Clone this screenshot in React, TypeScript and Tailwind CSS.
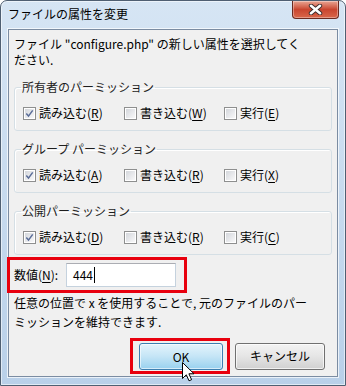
import React from "react";

function Check({ on }: { on?: boolean }) {
  return (
    <span className="flex w-[13px] h-[13px] shrink-0 border border-[#8e8f8f] bg-white p-px">
      <span className="flex flex-1 items-center justify-center bg-linear-to-br from-[#d4d7dc] to-[#f8f8f9]">
        {on && (
          <svg width="9" height="9" viewBox="0 0 9 9">
            <path d="M1.3 4.6 L3.5 7.1 L7.7 1.4" fill="none" stroke="#5a6d98" strokeWidth="1.5" />
          </svg>
        )}
      </span>
    </span>
  );
}

function Opt({ label, k, on }: { label: string; k: string; on?: boolean }) {
  return (
    <label className="flex items-center gap-[3px]">
      <Check on={on} />
      <span>
        {label}(<span className="underline underline-offset-[2px]">{k}</span>)
      </span>
    </label>
  );
}

function Group({ title, keys }: { title: string; keys: [string, string, string] }) {
  return (
    <fieldset className="mx-[5px] rounded-[3px] border border-[#d5dfe5] px-[8px] pt-[10px] pb-[9px] shadow-[inset_1px_1px_0_#fff]">
      <legend className="-ml-[2px] px-[1px] leading-[16px] text-[#1e1e1e]">{title}</legend>
      <div className="grid grid-cols-[101px_100px_auto] leading-[16px]">
        <Opt label="読み込む" k={keys[0]} on />
        <Opt label="書き込む" k={keys[1]} />
        <Opt label="実行" k={keys[2]} />
      </div>
    </fieldset>
  );
}

export default function App() {
  return (
    <div className="relative w-[346px] h-[386px] overflow-hidden rounded-t-[7px] border border-[#4f5f72] bg-linear-to-b from-[#d6e5f4] to-[#b9d0e9] text-[12px] text-black shadow-[inset_0_0_0_1px_rgba(255,255,255,0.55)] font-['Noto_Sans_CJK_JP','Noto_Sans',sans-serif]">
      {/* title bar */}
      <div className="flex h-[28px] items-start">
        <span className="pl-[7px] pt-[5px] leading-[16px]">ファイルの属性を変更</span>
        <div className="ml-auto mr-[6px] flex h-[18px] w-[47px] items-center justify-center rounded-b-[4px] border border-t-0 border-[#6b2a20] bg-linear-to-b from-[#e8a493] via-[#c9452f] to-[#d9664a] shadow-[inset_0_0_0_1px_rgba(255,255,255,0.35)]">
          <svg width="15" height="11" viewBox="0 0 15 11">
            <path d="M3 1.8 L12 9.2 M12 1.8 L3 9.2" stroke="#3b2a2a" strokeWidth="4.4" strokeLinecap="round" />
            <path d="M3 1.8 L12 9.2 M12 1.8 L3 9.2" stroke="#ffffff" strokeWidth="2.6" strokeLinecap="round" />
          </svg>
        </div>
      </div>

      {/* client area */}
      <div className="ml-[7px] flex h-[348px] w-[330px] flex-col border border-[#7b8ca2] bg-[#f0f0f0] shadow-[0_0_0_1px_rgba(255,255,255,0.7)]">
        <p className="pl-[5px] pt-[6px] leading-[16px]">
          ファイル "configure.php" の新しい属性を選択してく
          <br />
          ださい.
        </p>

        <div className="mt-[11px]">
          <Group title="所有者のパーミッション" keys={["R", "W", "E"]} />
        </div>
        <div className="mt-[10px]">
          <Group title="グループ パーミッション" keys={["A", "R", "X"]} />
        </div>
        <div className="mt-[10px]">
          <Group title="公開パーミッション" keys={["D", "R", "C"]} />
        </div>

        <div className="-ml-[2px] mt-[2px] flex h-[36px] w-[180px] items-center border-[3px] border-[#e8000e] pl-[4px]">
          <span className="inline-block w-[52px] leading-[16px]">
            数値(<span className="underline underline-offset-[2px]">N</span>):
          </span>
          <div className="flex h-[24px] w-[110px] items-center border border-[#c5d2de] border-t-[#abadb3] bg-white pl-[6px] leading-[16px]">
            444
            <span className="ml-px h-[16px] w-px bg-black" />
          </div>
        </div>

        <p className="pl-[5px] leading-[19px]">
          任意の位置で x を使用することで, 元のファイルのパー
          <br />
          ミッションを維持できます.
        </p>

        <div className="mt-[7px] flex items-center justify-end gap-[5px] pr-[12px]">
          <div className="border-[3px] border-[#e8000e] pl-[6px] pr-[4px] pt-[2px] pb-[1px]">
            <button className="flex h-[27px] w-[84px] items-center justify-center rounded-[3px] border border-[#3c7fb1] bg-linear-to-b from-[#e5f4fc] via-[#c4e5f6] to-[#98d1ef] shadow-[inset_0_0_0_1px_rgba(255,255,255,0.6)]">
              OK
            </button>
          </div>
          <button className="flex h-[27px] w-[90px] items-center justify-center rounded-[3px] border border-[#707070] bg-linear-to-b from-[#f3f3f3] via-[#e5e5e5] to-[#d0d0d0] shadow-[inset_0_0_0_1px_rgba(255,255,255,0.7)]">
            キャンセル
          </button>
        </div>
      </div>

      {/* mouse pointer */}
      <svg className="absolute left-[181px] top-[361px]" width="13" height="20" viewBox="0 0 13 20">
        <path d="M0.5 0.5 L0.5 16.5 L4.3 12.8 L7 18.8 L9.6 17.7 L6.9 11.8 L12 11.8 Z" fill="#fff" stroke="#000" strokeWidth="1" strokeLinejoin="round" />
      </svg>
    </div>
  );
}
